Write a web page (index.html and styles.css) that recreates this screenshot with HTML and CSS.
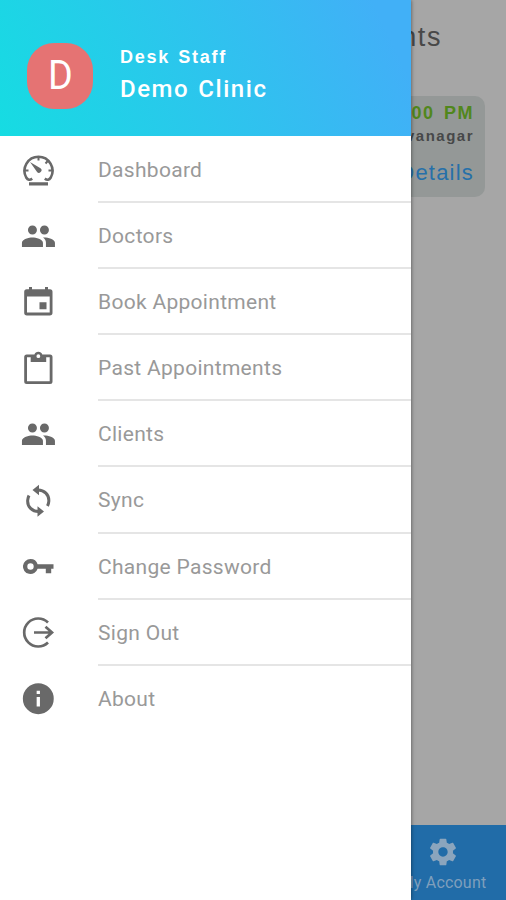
FILE: index.html
```html
<!DOCTYPE html>
<html lang="en">
<head>
<meta charset="utf-8">
<title>Demo Clinic</title>
<link rel="stylesheet" href="styles.css">
</head>
<body>
<div class="app">
  <main class="page">
    <h1 class="page-title">nts</h1>
    <section class="card">
      <div class="card-time">00 PM</div>
      <div class="card-place">vanagar</div>
      <div class="card-link">Details</div>
    </section>
    <nav class="tabs">
      <div class="tab">
        <svg class="gear" viewBox="0 0 24 24"><path d="M19.43 12.98c.04-.32.07-.64.07-.98s-.03-.66-.07-.98l2.11-1.65c.19-.15.24-.42.12-.64l-2-3.46c-.12-.22-.39-.3-.61-.22l-2.49 1c-.52-.4-1.08-.73-1.69-.98l-.38-2.65C14.46 2.18 14.25 2 14 2h-4c-.25 0-.46.18-.49.42l-.38 2.65c-.61.25-1.17.59-1.69.98l-2.49-1c-.23-.09-.49 0-.61.22l-2 3.46c-.13.22-.07.49.12.64l2.11 1.65c-.04.32-.07.65-.07.98s.03.66.07.98l-2.11 1.65c-.19.15-.24.42-.12.64l2 3.46c.12.22.39.3.61.22l2.49-1c.52.4 1.08.73 1.69.98l.38 2.65c.03.24.24.42.49.42h4c.25 0 .46-.18.49-.42l.38-2.65c.61-.25 1.17-.59 1.69-.98l2.49 1c.23.09.49 0 .61-.22l2-3.46c.12-.22.07-.49-.12-.64l-2.11-1.65zM12 15.5c-1.93 0-3.5-1.57-3.5-3.5s1.57-3.5 3.5-3.5 3.5 1.57 3.5 3.5-1.57 3.5-3.5 3.5z"/></svg>
        <span>My Account</span>
      </div>
    </nav>
  </main>
  <aside class="drawer">
    <header class="profile">
      <div class="avatar"><span class="initial">D</span></div>
      <div class="who">
        <div class="role">Desk Staff</div>
        <div class="clinic">Demo Clinic</div>
      </div>
    </header>
    <ul class="menu">
      <li class="item">
        <svg class="icon" viewBox="0 0 36 36"><g class="line"><path d="M12.200 26.600Q8.600 29.300 6.200 25.500A14 14 0 1 1 30.800 25.500Q28.400 29.300 24.800 26.600" stroke-width="2.600"/><path d="M18.500 4v4.500M28 8.800l-2.500 2.700M32.500 18.500h-4M4.500 18.500h4" stroke-width="2"/></g><path d="M10 10l10.500 6.300a2.500 2.500 0 1 1-3.600 3.400zM9 30.300h19v3.200H9z"/></svg>
        <span class="label">Dashboard</span>
      </li>
      <li class="item">
        <svg class="icon" viewBox="0 0 24 24"><path d="M16.300 11c1.660 0 2.990-1.340 2.990-3S17.960 5 16.300 5s-3 1.340-3 3 1.340 3 3 3zm-8 0c1.660 0 2.990-1.340 2.990-3S9.960 5 8.300 5s-3 1.340-3 3 1.340 3 3 3zm0 2c-2.330 0-7 1.170-7 3.500V19.300h14v-2.800c0-2.330-4.670-3.500-7-3.500zm8 0c-.29 0-.62.02-.97.05 1.160.84 1.970 1.970 1.970 3.450v2.800h6v-2.800c0-2.330-4.670-3.500-7-3.500z"/></svg>
        <span class="label">Doctors</span>
      </li>
      <li class="item">
        <svg class="icon" viewBox="0 0 36 36"><path fill-rule="evenodd" d="M9 3h3v2.300h13V3h3v2.300h2q2.500 0 2.500 2.500v21q0 2.700-2.700 2.700H6.900q-2.700 0-2.700-2.700v-21q0-2.500 2.500-2.500H9zM7 12.600v16h22.700v-16zM19.500 18.300h7v7h-7z"/></svg>
        <span class="label">Book Appointment</span>
      </li>
      <li class="item">
        <svg class="icon" viewBox="0 0 36 36"><path fill-rule="evenodd" d="M14.400 4.500a4.200 4.200 0 0 1 7.900 0h7.700q2.500 0 2.500 2.500v24.500q0 2.500-2.500 2.500H6.700q-2.500 0-2.500-2.500V7q0-2.500 2.500-2.500zM7 7.300v23.900h22.700V7.300h-3.500V12H10.700V7.300zM18.350 4.300a1.900 1.900 0 1 0 0 3.800 1.900 1.900 0 0 0 0-3.800z"/></svg>
        <span class="label">Past Appointments</span>
      </li>
      <li class="item">
        <svg class="icon" viewBox="0 0 24 24"><path d="M16.300 11c1.660 0 2.990-1.340 2.990-3S17.960 5 16.300 5s-3 1.340-3 3 1.340 3 3 3zm-8 0c1.660 0 2.990-1.340 2.990-3S9.960 5 8.300 5s-3 1.340-3 3 1.340 3 3 3zm0 2c-2.330 0-7 1.170-7 3.500V19.300h14v-2.800c0-2.330-4.670-3.500-7-3.500zm8 0c-.29 0-.62.02-.97.05 1.160.84 1.970 1.970 1.970 3.450v2.800h6v-2.800c0-2.330-4.670-3.500-7-3.500z"/></svg>
        <span class="label">Clients</span>
      </li>
      <li class="item">
        <svg class="icon" viewBox="0 0 36 36"><g class="line" stroke-width="3"><path d="M17 7C24.500 6.500 29.300 12 28.800 18.300q-.2 2.500-1.300 4.700M19.500 28.500C12 29 7.200 23.500 7.700 17.200q.2-2.500 1.300-4.700"/></g><path d="M12.500 7l6.500-5.300v10.600zM24 28.500l-6.500-5.300v10.600z"/></svg>
        <span class="label">Sync</span>
      </li>
      <li class="item">
        <svg class="icon" viewBox="0 0 36 36"><path fill-rule="evenodd" d="M10.500 10a7.500 7.500 0 0 1 7.100 5.300H33.500v4.400H31.200v4.600H25.800v-4.600H17.600a7.500 7.500 0 1 1-7.100-9.700zm0 4.300a3.200 3.200 0 1 0 0 6.400 3.200 3.200 0 0 0 0-6.400z"/></svg>
        <span class="label">Change Password</span>
      </li>
      <li class="item">
        <svg class="icon" viewBox="0 0 36 36"><g class="line" stroke-width="2.700"><path d="M28 7.500A14 14 0 1 0 28 27.500M14 17.500H32M25.500 11.700l6.500 5.800-6.500 5.800"/></g></svg>
        <span class="label">Sign Out</span>
      </li>
      <li class="item">
        <svg class="icon" viewBox="0 0 24 24"><path fill-rule="evenodd" d="M12.200 1.500a10.300 10.300 0 1 0 0 20.600 10.300 10.300 0 0 0 0-20.600zm1.100 15.500h-2.200v-6.400h2.200v6.400zm0-8.300h-2.200V6.500h2.200v2.200z"/></svg>
        <span class="label">About</span>
      </li>
    </ul>
  </aside>
</div>
</body>
</html>
```

FILE: styles.css
```css
* { box-sizing: border-box; }

body { margin: 0; }

.app {
  position: relative;
  width: 506px;
  height: 900px;
  overflow: hidden;
  font-family: Roboto, "Liberation Sans", sans-serif;
}

.page {
  display: flex;
  flex-direction: column;
  align-items: flex-end;
  height: 100%;
  background: #a6a6a6;
  font-family: "Liberation Sans", sans-serif;
}

.page-title {
  margin: 0;
  height: 96px;
  padding: 21px 64px 0 0;
  font-size: 27px;
  line-height: 32px;
  font-weight: 400;
  letter-spacing: 1.6px;
  color: #484848;
}

.card {
  width: 160px;
  height: 101px;
  padding: 7px 11px 0 0;
  margin-right: 21px;
  border-radius: 10px;
  background: #949897;
  text-align: right;
}

.card-time {
  font-size: 18px;
  line-height: 20px;
  font-weight: 700;
  letter-spacing: 1.5px;
  word-spacing: 3px;
  color: #51871c;
}

.card-place {
  margin-top: 3px;
  font-size: 15px;
  line-height: 19px;
  font-weight: 700;
  letter-spacing: 1.5px;
  color: #474849;
}

.card-link {
  margin-top: 15px;
  font-size: 22px;
  line-height: 26px;
  letter-spacing: 1.2px;
  color: #2670a9;
}

.tabs {
  display: flex;
  justify-content: flex-end;
  width: 100%;
  height: 75px;
  margin-top: auto;
  background: #216ca8;
}

.tab {
  display: flex;
  flex-direction: column;
  align-items: center;
  width: 126px;
  padding-top: 11px;
  font: 16px/20px Roboto, sans-serif;
  letter-spacing: 0.2px;
  color: #7f9fbc;
}

.gear {
  width: 32px;
  height: 32px;
  margin-bottom: 5px;
  fill: #8ba5bd;
}

.drawer {
  position: absolute;
  top: 0;
  left: 0;
  width: 411px;
  height: 100%;
  background: #fff;
  box-shadow: 0 0 4px rgba(0, 0, 0, 0.55);
}

.profile {
  display: flex;
  height: 136px;
  padding: 43px 0 0 27px;
  background: linear-gradient(65deg, #16dce2 0%, #41b0f7 92%);
  color: #fff;
}

.avatar {
  width: 66px;
  height: 66px;
  border-radius: 27px;
  background: #e57373;
  font-size: 41px;
  line-height: 65px;
  text-align: center;
}

.initial {
  display: inline-block;
  transform: scaleX(0.92);
}

.who { padding: 4px 0 0 27px; }

.role {
  font: 700 18px/21px "Liberation Sans", sans-serif;
  letter-spacing: 1.75px;
  word-spacing: 1.5px;
}

.clinic {
  margin-top: 6px;
  font-size: 24px;
  line-height: 31px;
  font-weight: 500;
  letter-spacing: 1.55px;
  word-spacing: 1.5px;
}

.menu {
  margin: 0;
  padding: 1px 0 0;
  list-style: none;
}

.item {
  display: flex;
  align-items: center;
  height: 66.1px;
  padding-left: 20px;
}

.icon {
  flex: none;
  width: 36px;
  height: 36px;
  margin-right: 42px;
  fill: #696969;
}

.line {
  fill: none;
  stroke: #696969;
}

.label {
  flex: 1;
  height: 100%;
  border-bottom: 2px solid #e5e5e5;
  font-size: 21px;
  line-height: 67px;
  letter-spacing: 0.3px;
  color: #999;
}

.item:last-child .label { border-bottom: 0; }
```
